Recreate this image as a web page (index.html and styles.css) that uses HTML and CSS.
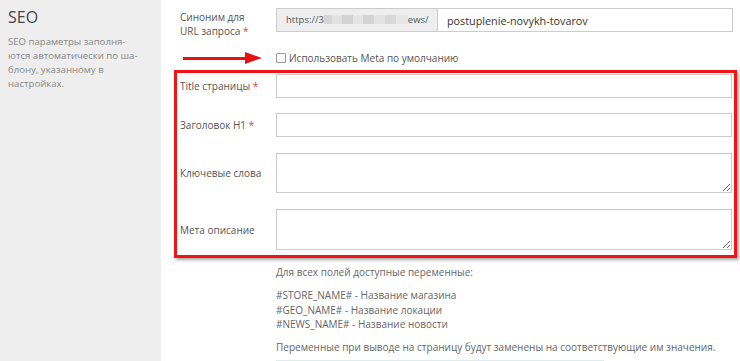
FILE: index.html
```html
<!DOCTYPE html>
<html lang="ru">
<head>
<meta charset="utf-8">
<title>SEO</title>
<link rel="stylesheet" href="styles.css">
</head>
<body>
<div class="page">
  <aside class="side">
    <h2 class="side-title">SEO</h2>
    <p class="side-text">SEO параметры заполня-<br>ются автоматически по ша-<br>блону, указанному в<br>настройках.</p>
  </aside>
  <main class="main">
    <div class="row url-row">
      <label class="lbl">Синоним для<br>URL запроса <span class="req">*</span></label>
      <div class="url-group">
        <span class="url-prefix">https://3<span class="blur"></span>ews/</span>
        <input class="inp url-inp" type="text" value="postuplenie-novykh-tovarov">
      </div>
    </div>
    <div class="row check-row">
      <div class="arrow-cell">
        <span class="arrow-shaft"></span><span class="arrow-head"></span>
      </div>
      <label class="check"><span class="box"></span>Использовать Meta по умолчанию</label>
    </div>
    <div class="redbox">
      <div class="row f-row">
        <label class="lbl">Title страницы <span class="req">*</span></label>
        <input class="inp" type="text">
      </div>
      <div class="row f-row">
        <label class="lbl">Заголовок H1 <span class="req">*</span></label>
        <input class="inp" type="text">
      </div>
      <div class="row f-row">
        <label class="lbl">Ключевые слова</label>
        <textarea class="ta"></textarea>
      </div>
      <div class="row f-row">
        <label class="lbl">Мета описание</label>
        <textarea class="ta ta2"></textarea>
      </div>
    </div>
    <div class="hint">
      <p class="hint-p">Для всех полей доступные переменные:</p>
      <p class="hint-p vars">#STORE_NAME# - Название магазина<br>#GEO_NAME# - Название локации<br>#NEWS_NAME# - Название новости</p>
      <p class="hint-p last">Переменные при выводе на страницу будут заменены на соответствующие им значения.</p>
      <div class="hint-line"></div>
    </div>
  </main>
</div>
</body>
</html>
```
FILE: styles.css
```css
* { box-sizing: border-box; }
html, body { margin: 0; padding: 0; background: #fff; }
body {
  font-family: "Open Sans", "Liberation Sans", sans-serif;
  font-size: 10px;
  color: #555;
  width: 740px;
  height: 361px;
  overflow: hidden;
}
.page { display: flex; height: 361px; }
.side {
  width: 161px;
  flex: none;
  background: #eeeeee;
  padding: 7px 8px 0 8px;
}
.side-title {
  margin: 0;
  font-weight: 400;
  font-size: 16px;
  line-height: 20px;
  color: #444;
}
.side-text {
  margin: 8px 0 0;
  font-size: 9.6px;
  line-height: 14px;
  color: #888;
  white-space: nowrap;
}
.main {
  flex: 1;
  padding: 8px 3px 0 13px;
}
.row {
  display: grid;
  grid-template-columns: 96px 1fr;
  align-items: center;
}
.url-row { padding-left: 6px; align-items: start; margin-right: 4px; }
.lbl { color: #555; font-size: 10px; line-height: 14px; white-space: nowrap; }
.url-row .lbl { padding-top: 2px; }
.req { color: #e63c3c; }
.url-group { display: flex; height: 24px; }
.url-prefix {
  width: 161px;
  flex: none;
  background: #eeeeee;
  border: 1px solid #cccccc;
  border-right: none;
  padding-left: 9px;
  color: #555;
  font-size: 9.5px;
  line-height: 22px;
  white-space: nowrap;
  overflow: hidden;
}
.blur {
  display: inline-block;
  width: 84px;
  height: 9px;
  vertical-align: -1px;
  background: linear-gradient(90deg, #d6d6d6 0 10%, #e2e2e2 10% 22%, #d2d2d2 22% 35%, #e4e4e4 35% 46%, #d4d4d4 46% 60%, #e3e3e3 60% 73%, #d8d8d8 73% 86%, #e6e6e6 86% 100%);
}
.inp {
  display: block;
  width: 100%;
  height: 24px;
  margin: 0;
  border: 1px solid #cccccc;
  background: #fff;
  font-family: inherit;
  font-size: 10.8px;
  color: #333;
  padding: 0 9px;
  outline: none;
}
.url-inp { flex: 1; min-width: 0; }
.check-row { padding-left: 6px; margin-top: 13px; height: 14px; }
.arrow-cell {
  display: flex;
  align-items: center;
  justify-content: flex-start;
  height: 14px;
  padding-left: 3px;
  width: 96px;
}
.arrow-shaft {
  display: block;
  flex: none;
  width: 64px;
  height: 3px;
  background: #e81010;
}
.arrow-head {
  display: block;
  flex: none;
  width: 0;
  height: 0;
  margin-left: -2px;
  border-top: 6px solid transparent;
  border-bottom: 6px solid transparent;
  border-left: 17px solid #e81010;
}
.check {
  display: flex;
  align-items: center;
  gap: 3px;
  color: #555;
  font-size: 10px;
  line-height: 14px;
  white-space: nowrap;
}
.box {
  width: 10px;
  height: 10px;
  border: 1px solid #999;
  border-radius: 1px;
  background: #fff;
  flex: none;
}
.redbox {
  margin-top: 5px;
  border: 3px solid #f01414;
  box-shadow: 2px 2px 3px rgba(0, 0, 0, 0.35);
  padding: 1px 2px 5px 3px;
  display: flex;
  flex-direction: column;
  gap: 15px;
}
.redbox .row + .row + .row { margin-top: 1px; }
.ta {
  display: block;
  width: 100%;
  height: 40px;
  margin: 0;
  border: 1px solid #cccccc;
  border-top-color: #c4c4c4;
  background: #fff;
  resize: vertical;
  font-family: inherit;
  font-size: 11px;
  padding: 2px 4px;
  outline: none;
}
.ta2 { height: 41px; }
.hint { padding-left: 102px; padding-top: 7px; color: #666; }
.hint-p { margin: 0 0 8.5px; font-size: 10px; line-height: 14.5px; white-space: nowrap; }
.hint-p.last { margin-bottom: 0; }
.hint-line { height: 1px; width: 328px; background: #dfecec; margin-top: 5px; }
```
